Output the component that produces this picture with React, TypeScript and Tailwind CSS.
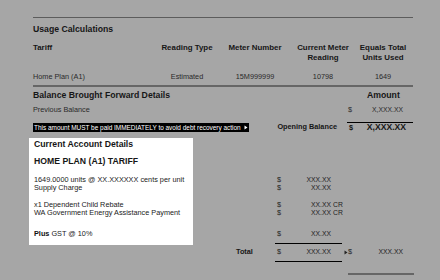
import React from "react";

function Tri({ className = "" }: { className?: string }) {
  return (
    <svg width="4" height="5" viewBox="0 0 4 5" className={className}>
      <path d="M0.5 0.5 L3.5 2.5 L0.5 4.5 Z" fill="currentColor" />
    </svg>
  );
}

export default function App() {
  return (
    <div className="w-[440px] h-[280px] overflow-hidden bg-[#a6a6a6] text-[#161616] [font-family:'Liberation_Sans',Arial,sans-serif]">
      <div className="ml-[33px] w-[385px] pt-[17px]">
        <div className="h-px w-[380px] bg-[#5c5c5c]" />
        <div className="mt-[6px] text-[8.7px] leading-[11px] font-bold">Usage Calculations</div>

        <div className="mt-[8px] grid grid-cols-[117px_74px_62px_74px_46px] text-[7.9px] leading-[10px] font-bold">
          <div>Tariff</div>
          <div className="flex flex-col items-center whitespace-nowrap">Reading Type</div>
          <div className="flex flex-col items-center whitespace-nowrap">Meter Number</div>
          <div className="flex flex-col items-center whitespace-nowrap">
            <span>Current Meter</span>
            <span>Reading</span>
          </div>
          <div className="flex flex-col items-center whitespace-nowrap">
            <span>Equals Total</span>
            <span>Units Used</span>
          </div>
        </div>

        <div className="mt-[9px] grid grid-cols-[117px_74px_62px_74px_46px] text-[7.3px] leading-[10px] text-[#2a2a2a]">
          <div>Home Plan (A1)</div>
          <div className="flex flex-col items-center">Estimated</div>
          <div className="flex flex-col items-center">15M999999</div>
          <div className="flex flex-col items-center">10798</div>
          <div className="flex flex-col items-center">1649</div>
        </div>

        <div className="mt-[3px] h-[2px] w-[380px] bg-[#666666]" />

        <div className="mt-[3px] flex leading-[11px] text-[8.7px] font-bold">
          <div className="w-[314px]">Balance Brought Forward Details</div>
          <div className="pl-[20px]">Amount</div>
        </div>

        <div className="mt-[4px] flex leading-[10px] text-[7.3px] text-[#2a2a2a]">
          <div className="w-[314px]">Previous Balance</div>
          <div className="flex w-[56px]">
            <span className="pl-px">$</span>
            <span className="ml-auto text-[6.8px]">X,XXX.XX</span>
          </div>
        </div>

        <div className="mt-[7px] flex items-start">
          <div className="mt-px flex h-[9px] w-[216px] items-center gap-[3px] overflow-hidden bg-black pl-px text-[6.45px] leading-[9px] text-white whitespace-nowrap">
            <span>This amount MUST be paid IMMEDIATELY to avoid debt recovery action</span>
            <Tri />
          </div>
          <div className="w-[88px] text-right text-[7.3px] leading-[10px] font-bold">Opening Balance</div>
          <div className="ml-[10px] flex w-[66px] border-t border-black pr-[7px] leading-[9px] font-bold">
            <span className="pl-[2px] text-[7.3px]">$</span>
            <span className="ml-auto text-[8.6px]">X,XXX.XX</span>
          </div>
        </div>

        <div className="mt-[6px]">
          <div className="flex">
            <div className="-ml-[4px] w-[164px] bg-white pl-[5px] pt-px font-bold">
              <div className="text-[8.7px] leading-[11px]">Current Account Details</div>
              <div className="pt-[6px] text-[8.7px] leading-[11px]">HOME PLAN (A1) TARIFF</div>
            </div>
          </div>

          <div className="flex text-[7.3px] leading-[8px] text-[#222222]">
            <div className="-ml-[4px] w-[164px] bg-white pl-[5px] pt-[9px]">
              <div className="whitespace-nowrap">1649.0000 units @ XX.XXXXXX cents per unit</div>
              <div>Supply Charge</div>
            </div>
            <div className="ml-[82px] self-start pt-[9px]">
              <div className="flex w-[56px]">
                <span className="pl-[2px]">$</span>
                <span className="ml-auto text-[6.8px]">XXX.XX</span>
              </div>
              <div className="flex w-[56px]">
                <span className="pl-[2px]">$</span>
                <span className="ml-auto text-[6.8px]">XX.XX</span>
              </div>
            </div>
          </div>

          <div className="flex text-[7.3px] leading-[8px] text-[#222222]">
            <div className="-ml-[4px] w-[164px] bg-white pl-[5px] pt-[9px]">
              <div>x1 Dependent Child Rebate</div>
              <div className="whitespace-nowrap">WA Government Energy Assistance Payment</div>
            </div>
            <div className="ml-[82px] self-start pt-[9px]">
              <div className="flex">
                <div className="flex w-[56px]">
                  <span className="pl-[2px]">$</span>
                  <span className="ml-auto text-[6.8px]">XX.XX</span>
                </div>
                <span className="pl-[2px] text-[6.8px]">CR</span>
              </div>
              <div className="flex">
                <div className="flex w-[56px]">
                  <span className="pl-[2px]">$</span>
                  <span className="ml-auto text-[6.8px]">XX.XX</span>
                </div>
                <span className="pl-[2px] text-[6.8px]">CR</span>
              </div>
            </div>
          </div>

          <div className="flex text-[7.3px] leading-[8px] text-[#222222]">
            <div className="-ml-[4px] w-[164px] bg-white pb-[7px] pl-[5px] pt-[13px]">
              <span className="font-bold text-[#111111]">Plus</span> GST @ 10%
            </div>
            <div className="ml-[82px] w-[67px] self-start border-b border-black pb-[5px] pt-[13px]">
              <div className="flex w-[56px]">
                <span className="pl-[2px]">$</span>
                <span className="ml-auto text-[6.8px]">XX.XX</span>
              </div>
            </div>
          </div>

          <div className="flex text-[7.3px] leading-[10px]">
            <div className="ml-[203px] w-[39px] pt-[2px] font-bold">Total</div>
            <div className="flex w-[67px] border-b border-black pb-[4px] pr-[11px] pt-[2px] text-[#222222]">
              <span className="pl-[2px]">$</span>
              <span className="ml-auto text-[6.8px]">XXX.XX</span>
            </div>
            <div className="flex w-[61px] items-start pt-[2px] text-[#222222]">
              <span className="mt-[2.5px] pl-[2px]">
                <Tri />
              </span>
              <span>$</span>
              <span className="ml-auto text-[6.8px]">XXX.XX</span>
            </div>
          </div>

          <div className="ml-[315px] mt-[11px] h-[2px] w-[66px] bg-[#666666]" />

          <div className="mt-[3px] flex text-[7.3px] leading-[10px]">
            <div className="ml-[260px] w-[55px] font-bold">Total Payable</div>
            <div className="flex w-[56px] text-[#222222]">
              <span className="pl-px">$</span>
              <span className="ml-auto text-[6.8px]">X,XXX.XX</span>
            </div>
          </div>
        </div>
      </div>
    </div>
  );
}
